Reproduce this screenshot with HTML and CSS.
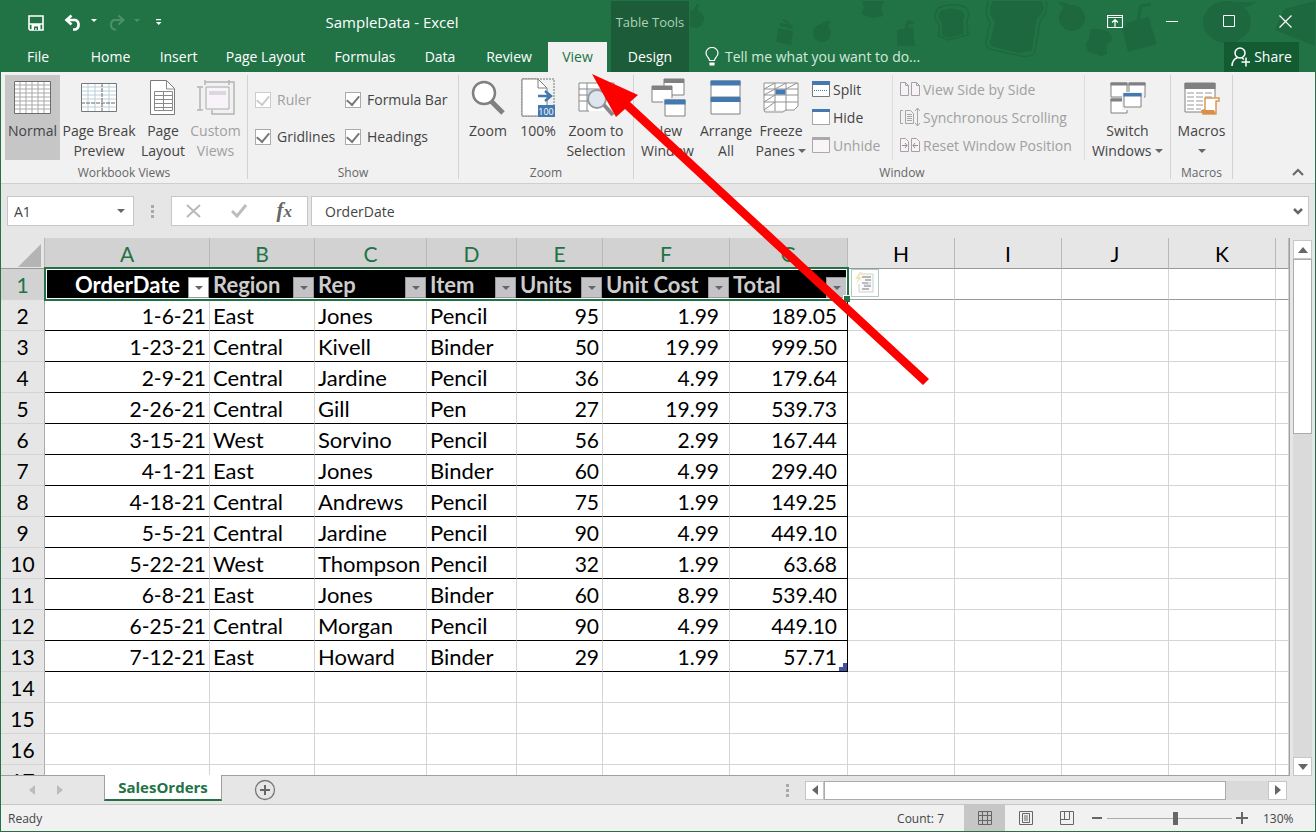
FILE: index.html
```html
<!DOCTYPE html>
<html lang="en">
<head>
<meta charset="utf-8">
<title>SampleData - Excel</title>
<link rel="stylesheet" href="styles.css">
</head>
<body>
<div class="app">
<header class="top">
  <svg class="decor" width="626" height="71" viewBox="690 1 626 71" aria-hidden="true">
    <g fill="#1d683e">
      <circle cx="695" cy="19" r="9"/><path d="M693 11l4-7 3 1-4 8z"/>
      <path d="M778 28l15 3-2 14-15-3z"/><path d="M779 26l14 3-1-4-12-2z"/><path d="M783 20l5 2 1 4" fill="none" stroke="#1d683e" stroke-width="2"/>
      <circle cx="822" cy="33" r="9"/><path d="M820 27q2-7 11-6-2 6-9 8z"/>
      <path d="M862 1h22l-3 9 3 6-12 2-11-4 3-6z"/>
      <path d="M897 30l16-3 2 19h-18z"/><path d="M906 29l2-7 6 1" fill="none" stroke="#1d683e" stroke-width="3"/>
      <path d="M940 11q11-5 22 0 5 4 1 9l1 14-15 4-7-3v-12q-6-6-2-12z"/>
      <path d="M993 1h49q5 11-5 17l-5 33-13 2-26-6q-5-3-2-8l4-17q-9-11-2-21z"/>
      <circle cx="1072" cy="18" r="13"/><path d="M1058 2q9-2 14 7-9 1-14-7z"/>
      <path d="M1090 30q10-4 21 4l1 6-5 5v9l-6 2-14-5-1-8 3-4z"/>
      <path d="M1122 28l27-8 8 24-29 8z"/><path d="M1126 23l22-6 3 5-24 6z"/><path d="M1138 20l3-14 10-2" fill="none" stroke="#1d683e" stroke-width="3"/>
      <ellipse cx="1227" cy="22" rx="24" ry="21"/><path d="M1235 2h21q-8 7-20 5z"/>
      <path d="M1284 9l32-8v44h-4l-37-15z"/>
    </g>
    <g fill="none" stroke="#1d683e" stroke-width="1.500">
      <path d="M938 8q14-6 27-1 6 5 2 13l1 15-20 5-9-4v-12q-7-6-1-16z"/>
      <path d="M989 0q-6 13 1 22l-4 20q0 7 7 8l28 6q12 2 14-5l5-30q9-10 6-20"/>
    </g>
  </svg>
  <div class="title-row">
    <div class="qat">
      <button aria-label="Save"><svg width="16" height="16" viewBox="0 0 16 16"><path d="M1 1h14v14H2l-1-1zM1 9h14" fill="none" stroke="#fff" stroke-width="1.600"/><path d="M3.500 9h9v6h-9z" fill="#fff"/><path d="M6 11.500h4V15H8.500v-2H7.300v2H6z" fill="#217346"/></svg></button>
      <button aria-label="Undo" class="undo"><svg width="34" height="18" viewBox="0 0 34 18"><path d="M2.500 6h9a4.500 5 0 0 1 0 9.500H9" fill="none" stroke="#fff" stroke-width="2.600"/><path d="M7.500 1.500L2.500 6l5 4.500" fill="none" stroke="#fff" stroke-width="2.600"/><path d="M27 5h6l-3 3z" fill="#fff"/></svg></button>
      <button aria-label="Redo" class="redo" disabled><svg width="34" height="18" viewBox="0 0 34 18"><path d="M16 6H7a4.500 5 0 0 0 0 9.500h2" fill="none" stroke="#4c9069" stroke-width="2"/><path d="M11.500 1.500L16.500 6l-5 4.500" fill="none" stroke="#4c9069" stroke-width="2"/><path d="M27 5h6l-3 3z" fill="#4c9069"/></svg></button>
      <button aria-label="Customize Quick Access Toolbar"><svg width="8" height="8" viewBox="0 0 8 8"><path d="M1 0h5v1.300H1zM1 3h5.500L3.800 6z" fill="#fff"/></svg></button>
    </div>
    <div class="doc-title">SampleData - Excel</div>
    <div class="context-title">Table Tools</div>
    <div class="win-controls">
      <button aria-label="Ribbon Display Options"><svg width="16" height="13" viewBox="0 0 16 13"><path d="M.5.500h15v12H.5zM.5 2.500h15M8 12V5M5 7.500L8 4.500l3 3" fill="none" stroke="#fff" stroke-width="1.200"/></svg></button>
      <button aria-label="Minimize"><svg width="12" height="13" viewBox="0 0 12 13"><path d="M0 6.500h12" stroke="#fff"/></svg></button>
      <button aria-label="Maximize"><svg width="12" height="12" viewBox="0 0 12 12"><path d="M.5.500h11v11H.5z" fill="none" stroke="#fff"/></svg></button>
      <button aria-label="Close"><svg width="13" height="13" viewBox="0 0 13 13"><path d="M.5.500l12 12M12.500.500l-12 12" stroke="#fff" stroke-width="1.200"/></svg></button>
    </div>
  </div>
  <nav class="tabs">
    <button class="file">File</button>
    <button>Home</button>
    <button>Insert</button>
    <button>Page Layout</button>
    <button>Formulas</button>
    <button>Data</button>
    <button>Review</button>
    <button class="active">View</button>
    <span></span>
    <button class="context">Design</button>
    <button class="tell"><svg width="14" height="20" viewBox="0 0 14 20"><path d="M4.500 13.500c0-3-3.500-3.500-3.500-7.500a6 5.500 0 0 1 12 0c0 4-3.500 4.500-3.500 7.500zM4.500 16h5" fill="none" stroke="#fff" stroke-width="1.200"/><path d="M4.500 16h5v2.500h-5z" fill="#fff"/></svg>Tell me what you want to do...</button>
    <button class="share"><svg width="19" height="20" viewBox="0 0 19 20"><circle cx="9" cy="6" r="5" fill="none" stroke="#fff" stroke-width="1.500"/><path d="M1 19c0-5 2-7 5.500-8.500M11 11l2 1.500M15 10.500v9M10.500 15h8.500" fill="none" stroke="#fff" stroke-width="1.500"/></svg>Share</button>
  </nav>
</header>

<section class="ribbon">
  <div class="group">
    <div class="tools views">
      <button class="big on"><svg width="38" height="36" viewBox="1 0 38 36"><path d="M1 1h36v32H1z" fill="#fff"/><path d="M7 1v32M13 1v32M19 1v32M25 1v32M31 1v32M1 5h36M1 9h36M1 13h36M1 17h36M1 21h36M1 25h36M1 29h36" stroke="#a9a9a9"/><path d="M1.500 1.500h36v32h-36z" fill="none" stroke="#6d6d6d"/></svg>Normal</button>
      <button class="big"><svg width="38" height="36" viewBox="0 0 38 36"><path d="M1 3h36v28H1z" fill="#fff"/><path d="M8 3v28M15 3v28M29 3v28M1 7h36M1 11h36M1 15h36M1 19h36M1 27h36" stroke="#b9cfdb"/><path d="M22 3v28M1 23h36" stroke="#666" stroke-dasharray="4 1"/><path d="M1.500 3.500h35v28h-35z" fill="none" stroke="#777"/></svg>Page Break Preview</button>
      <button class="big"><svg width="26" height="36" viewBox="0 0 26 36"><path d="M.5.500h16l8 8v26H.5z" fill="#fff" stroke="#7a7a7a"/><path d="M16.500 1v8h8M4.500 11.500h18v19h-18zM13.500 11v19M4 15.500h18M4 19.500h18M4 23.500h18M4 27.500h18" fill="none" stroke="#8a8a8a"/></svg>Page Layout</button>
      <button class="big off"><svg width="38" height="36" viewBox="0 0 38 36"><path d="M9 7h23v22H9z" fill="#f8f3f8" stroke="#aaa"/><path d="M12 11h17v4H12z" fill="#ddd6e0"/><path d="M8 2h24M8 0v5M32 0v5M3 7v23M0 7h6M0 30h6M32 2h5v32H15v-4" fill="none" stroke="#b4b4b4" stroke-width="1.500"/></svg>Custom Views</button>
    </div>
    <h2>Workbook Views</h2>
  </div>
  <div class="group">
    <div class="tools checks">
      <label class="off"><input type="checkbox" checked disabled>Ruler</label>
      <label><input type="checkbox" checked>Formula Bar</label>
      <label><input type="checkbox" checked>Gridlines</label>
      <label><input type="checkbox" checked>Headings</label>
    </div>
    <h2>Show</h2>
  </div>
  <div class="group">
    <div class="tools zooms">
      <button class="big"><svg width="36" height="36" viewBox="0 0 36 36"><path d="M21 21l12 12" stroke="#808080" stroke-width="5"/><circle cx="14" cy="13" r="11" fill="#fff" stroke="#808080" stroke-width="2.500"/></svg>Zoom</button>
      <button class="big"><svg width="34" height="40" viewBox="0 0 34 40"><path d="M1 1h32v37H1z" fill="none" stroke="#777" stroke-dasharray="2 1"/><path d="M1 1h16l9 9v28H1z" fill="#fff" stroke="#808080"/><path d="M17 1v9h9" fill="none" stroke="#808080"/><path d="M17 18h12M24 13l6 5-6 5" fill="none" stroke="#4179b0" stroke-width="2.500"/><path d="M17 27h17v12H17z" fill="#4179b0"/><text x="25" y="37" class="hundred">100</text></svg>100%</button>
      <button class="big"><svg width="38" height="36" viewBox="0 0 38 36"><path d="M2 3h35v22l-10 6H2z" fill="#fff"/><path d="M2 3h35v20M2 3v28h10M2 9h35M2 15h15M2 21h12M10 3v28M28 3v8" fill="none" stroke="#888"/><path d="M11 10h17v10H11z" fill="#c9d8ea"/><circle cx="20" cy="19" r="9" fill="#dce6ef" stroke="#999" stroke-width="2"/><path d="M27 25l9 10" stroke="#888" stroke-width="4"/></svg>Zoom to Selection</button>
    </div>
    <h2>Zoom</h2>
  </div>
  <div class="group">
    <div class="tools windows">
      <button class="big"><svg width="36" height="40" viewBox="0 0 36 40"><g fill="#fff" stroke="#808080"><path d="M14 1h20v16H14z"/><path d="M2 8h20v16H2z"/></g><path d="M14 1h20v4H14zM2 8h20v4H2z" fill="#808080"/><path d="M13 20h23v20H13z" fill="#f1f1f1"/><path d="M15 22h20v16H15z" fill="#fff" stroke="#808080"/><path d="M14.500 21.500h21v5h-21z" fill="#4179b0"/></svg>New Window</button>
      <button class="big"><svg width="32" height="36" viewBox="0 0 32 36"><path d="M1 1h29v16H1zM1 18h29v16H1z" fill="#fff" stroke="#808080"/><path d="M.5.500h30v5H.5zM.5 17h30v5H.5z" fill="#4179b0"/></svg>Arrange All</button>
      <button class="big"><svg width="36" height="36" viewBox="0 0 36 36"><path d="M1 3h34v22l-4 5H6l-5-5z" fill="#fff"/><path d="M1 3h34v23l-4 4h-8l-3 2H2l-1-2zM1 9h34M1 15h34M1 22h34M12 3v28M23 3v28M1 9l11-6M12 9l11-6M23 9l11-6M1 15l11-6M1 22l11-7M1 30l11-8" fill="none" stroke="#929292"/><path d="M12.500 9.500h10v5h-10z" fill="#4179b0"/></svg><span>Freeze Panes <i class="caret"></i></span></button>
      <div class="smalls first">
        <button><svg width="18" height="16" viewBox="0 0 18 16"><path d="M.5.500h17v15H.5z" fill="#fff" stroke="#777"/><path d="M0 0h18v4H0z" fill="#4179b0"/><path d="M2 9.500h14" stroke="#4179b0" stroke-dasharray="1 1"/></svg>Split</button>
        <button><svg width="18" height="16" viewBox="0 0 18 16"><path d="M.5.500h17v15H.5z" fill="#fff" stroke="#555" stroke-dasharray="1 1"/><path d="M0 0h18v3H0z" fill="#4179b0"/></svg>Hide</button>
        <button disabled><svg width="18" height="16" viewBox="0 0 18 16"><path d="M.5.500h17v15H.5z" fill="#f8f4f8" stroke="#aaa"/><path d="M0 0h18v3H0z" fill="#aaa"/></svg>Unhide</button>
      </div>
      <div class="smalls">
        <button disabled><svg width="20" height="16" viewBox="0 0 20 16"><path d="M.5 1.500h5l3 3v10h-8zM5.500 1.500v3h3M11.500 1.500h5l3 3v10h-8zM16.500 1.500v3h3" fill="#f6f2f6" stroke="#a8a0a8"/></svg>View Side by Side</button>
        <button disabled><svg width="20" height="20" viewBox="0 0 20 20"><path d="M3 3.500H.5v13H3M5.500 3.500h5l3 3v10h-8zM7 7.500h5M7 9.500h5M7 11.500h5M7 13.500h5M17.500 1v18M15 4l2.500-3L20 4M15 16l2.500 3 2.500-3" fill="none" stroke="#a6a6a6"/></svg>Synchronous Scrolling</button>
        <button disabled><svg width="20" height="16" viewBox="0 0 20 16"><path d="M.5 1.500h5l3 3v10h-8zM11.500 1.500h5l3 3v10h-8z" fill="#f6f2f6" stroke="#a8a0a8"/><path d="M2 8.500h5M5 6l2 2.500L5 11M18 8.500h-5M15 6l-2 2.500 2 2.500" fill="none" stroke="#909090"/></svg>Reset Window Position</button>
      </div>
      <button class="big"><svg width="36" height="36" viewBox="0 0 36 36"><g fill="#fff" stroke="#808080"><path d="M1 3h16v14H1zM19 3h16v14H19zM1 19h16v14H1z"/></g><path d="M.5 2.500h17v3H.5zM18.500 2.500h17v3h-17zM.5 18.500h17v3H.5z" fill="#808080"/><path d="M12 12h22v18H12z" fill="#f1f1f1"/><path d="M14 14h17v13H14z" fill="#fff" stroke="#808080"/><path d="M13.500 13h18v3.500h-18z" fill="#4179b0"/></svg><span>Switch Windows <i class="caret"></i></span></button>
    </div>
    <h2>Window</h2>
  </div>
  <div class="group">
    <div class="tools macros">
      <button class="big"><svg width="38" height="36" viewBox="0 0 38 36"><path d="M2 3h30v29H2z" fill="#fff" stroke="#808080"/><path d="M1.500 3h31v6h-31z" fill="#808080"/><path d="M4 13h7M13 13h7M22 13h7M4 17h7M13 17h7M22 17h7M4 21h7M13 21h7M4 25h7M13 25h7M4 29h7M13 29h5" stroke="#999"/><path d="M22 18h14v3h-3v13H20v-4h2z" fill="#fff" stroke="#d99a55" stroke-width="1.500"/><path d="M18 30h13l2 4H20q-2-1-2-4z" fill="#d98f45"/></svg><span>Macros <i class="caret"></i></span></button>
    </div>
    <h2>Macros</h2>
  </div>
  <button class="collapse" aria-label="Collapse the Ribbon"><svg width="12" height="8" viewBox="0 0 12 8"><path d="M1 7l5-5 5 5" fill="none" stroke="#666" stroke-width="2"/></svg></button>
</section>

<section class="formula-bar">
  <div class="name-box"><input aria-label="Name Box" value="A1"><i class="caret"></i></div>
  <i class="dots"></i>
  <div class="fx">
    <button aria-label="Cancel"><svg width="16" height="14" viewBox="0 0 16 14"><path d="M1 1l13 12M14 1L1 13" stroke="#b9b9b9" stroke-width="2"/></svg></button>
    <button aria-label="Enter"><svg width="16" height="14" viewBox="0 0 16 14"><path d="M1 7l5 5L15 1" fill="none" stroke="#bdbdbd" stroke-width="3"/></svg></button>
    <button aria-label="Insert Function" class="fn">f<small>x</small></button>
  </div>
  <div class="formula"><input aria-label="Formula Bar" value="OrderDate"><svg width="10" height="7" viewBox="0 0 10 7"><path d="M1 1l4 4 4-4" fill="none" stroke="#666" stroke-width="2.500"/></svg></div>
</section>

<main class="sheet-area">
  <div class="sheet">
  <table>
    <colgroup><col class="w-row"><col class="w-a"><col class="w-b"><col class="w-c"><col class="w-d"><col class="w-e"><col class="w-f"><col class="w-g"><col class="w-h"><col class="w-h"><col class="w-h"><col class="w-h"><col></colgroup>
    <thead><tr><th class="corner"><svg width="24" height="23" viewBox="0 0 24 23"><path d="M23 0v23H0z" fill="#b4b4b4"/></svg></th><th class="sel">A</th><th class="sel">B</th><th class="sel">C</th><th class="sel">D</th><th class="sel">E</th><th class="sel">F</th><th class="sel">G</th><th>H</th><th>I</th><th>J</th><th>K</th><th></th></tr></thead>
    <tbody>
    <tr class="head"><th class="sel">1</th>
      <td><div class="hc first"><span>OrderDate</span><button aria-label="Filter OrderDate"><i class="caret"></i></button></div></td>
      <td><div class="hc"><span>Region</span><button aria-label="Filter Region"><i class="caret"></i></button></div></td>
      <td><div class="hc"><span>Rep</span><button aria-label="Filter Rep"><i class="caret"></i></button></div></td>
      <td><div class="hc"><span>Item</span><button aria-label="Filter Item"><i class="caret"></i></button></div></td>
      <td><div class="hc"><span>Units</span><button aria-label="Filter Units"><i class="caret"></i></button></div></td>
      <td><div class="hc"><span>Unit Cost</span><button aria-label="Filter Unit Cost"><i class="caret"></i></button></div></td>
      <td><div class="hc"><span>Total</span><button aria-label="Filter Total"><i class="caret"></i></button></div></td>
      <td></td><td></td><td></td><td></td><td></td></tr>
    <tr class="d"><th>2</th><td>1-6-21</td><td>East</td><td>Jones</td><td>Pencil</td><td>95</td><td>1.99</td><td>189.05</td><td></td><td></td><td></td><td></td><td></td></tr>
    <tr class="d"><th>3</th><td>1-23-21</td><td>Central</td><td>Kivell</td><td>Binder</td><td>50</td><td>19.99</td><td>999.50</td><td></td><td></td><td></td><td></td><td></td></tr>
    <tr class="d"><th>4</th><td>2-9-21</td><td>Central</td><td>Jardine</td><td>Pencil</td><td>36</td><td>4.99</td><td>179.64</td><td></td><td></td><td></td><td></td><td></td></tr>
    <tr class="d"><th>5</th><td>2-26-21</td><td>Central</td><td>Gill</td><td>Pen</td><td>27</td><td>19.99</td><td>539.73</td><td></td><td></td><td></td><td></td><td></td></tr>
    <tr class="d"><th>6</th><td>3-15-21</td><td>West</td><td>Sorvino</td><td>Pencil</td><td>56</td><td>2.99</td><td>167.44</td><td></td><td></td><td></td><td></td><td></td></tr>
    <tr class="d"><th>7</th><td>4-1-21</td><td>East</td><td>Jones</td><td>Binder</td><td>60</td><td>4.99</td><td>299.40</td><td></td><td></td><td></td><td></td><td></td></tr>
    <tr class="d"><th>8</th><td>4-18-21</td><td>Central</td><td>Andrews</td><td>Pencil</td><td>75</td><td>1.99</td><td>149.25</td><td></td><td></td><td></td><td></td><td></td></tr>
    <tr class="d"><th>9</th><td>5-5-21</td><td>Central</td><td>Jardine</td><td>Pencil</td><td>90</td><td>4.99</td><td>449.10</td><td></td><td></td><td></td><td></td><td></td></tr>
    <tr class="d"><th>10</th><td>5-22-21</td><td>West</td><td>Thompson</td><td>Pencil</td><td>32</td><td>1.99</td><td>63.68</td><td></td><td></td><td></td><td></td><td></td></tr>
    <tr class="d"><th>11</th><td>6-8-21</td><td>East</td><td>Jones</td><td>Binder</td><td>60</td><td>8.99</td><td>539.40</td><td></td><td></td><td></td><td></td><td></td></tr>
    <tr class="d"><th>12</th><td>6-25-21</td><td>Central</td><td>Morgan</td><td>Pencil</td><td>90</td><td>4.99</td><td>449.10</td><td></td><td></td><td></td><td></td><td></td></tr>
    <tr class="d last"><th>13</th><td>7-12-21</td><td>East</td><td>Howard</td><td>Binder</td><td>29</td><td>1.99</td><td>57.71</td><td></td><td></td><td></td><td></td><td></td></tr>
    <tr><th>14</th><td></td><td></td><td></td><td></td><td></td><td></td><td></td><td></td><td></td><td></td><td></td><td></td></tr>
    <tr><th>15</th><td></td><td></td><td></td><td></td><td></td><td></td><td></td><td></td><td></td><td></td><td></td><td></td></tr>
    <tr><th>16</th><td></td><td></td><td></td><td></td><td></td><td></td><td></td><td></td><td></td><td></td><td></td><td></td></tr>
    <tr><th>17</th><td></td><td></td><td></td><td></td><td></td><td></td><td></td><td></td><td></td><td></td><td></td><td></td></tr>
    </tbody>
  </table>
  <div class="selection"></div>
  <button class="quick" aria-label="Quick Analysis"><svg width="20" height="22" viewBox="0 0 20 22"><path d="M6 2h12v18H4v-8" fill="#fafafa" stroke="#ccd2d2"/><path d="M7 5h9M10 8h6M7 11h6M9 14h7M7 17h7" stroke="#b9b9b0" stroke-width="2"/><path d="M9 13h7M7 11h9" stroke="#b8c4e0" stroke-width="1"/><path d="M5 0L0 7h3l-2 5 6-7H4l3-5z" fill="#f1e6b4"/></svg></button>
  </div>
  <div class="vscroll">
    <button aria-label="Scroll up"><svg width="10" height="6" viewBox="0 0 10 6"><path d="M0 6l5-6 5 6z" fill="#666"/></svg></button>
    <div class="thumb"></div><div class="track"></div>
    <button aria-label="Scroll down"><svg width="10" height="6" viewBox="0 0 10 6"><path d="M0 0l5 6 5-6z" fill="#666"/></svg></button>
  </div>
</main>

<section class="sheet-tabs">
  <div class="nav">
    <button aria-label="Previous sheet"><svg width="6" height="10" viewBox="0 0 6 10"><path d="M6 0L0 5l6 5z" fill="#bcbcbc"/></svg></button>
    <button aria-label="Next sheet"><svg width="6" height="10" viewBox="0 0 6 10"><path d="M0 0l6 5-6 5z" fill="#bcbcbc"/></svg></button>
  </div>
  <button class="sheet-tab">SalesOrders</button>
  <button class="add" aria-label="New sheet"><svg width="22" height="22" viewBox="0 0 22 22"><circle cx="11" cy="11" r="9.500" fill="none" stroke="#777" stroke-width="1.300"/><path d="M11 6v10M6 11h10" stroke="#666" stroke-width="2"/></svg></button>
  <i class="dots"></i>
  <div class="hscroll">
    <button aria-label="Scroll left"><svg width="6" height="10" viewBox="0 0 6 10"><path d="M6 0L0 5l6 5z" fill="#666"/></svg></button>
    <div class="thumb"></div><div class="track"></div>
    <button aria-label="Scroll right"><svg width="6" height="10" viewBox="0 0 6 10"><path d="M0 0l6 5-6 5z" fill="#666"/></svg></button>
  </div>
</section>

<footer class="status">
  <span class="ready">Ready</span>
  <span class="count">Count: 7</span>
  <button class="on" aria-label="Normal view"><svg width="14" height="14" viewBox="0 0 14 14"><path d="M.5.500h13v13H.5zM4.500 0v14M9.500 0v14M0 4.500h14M0 9.500h14" fill="none" stroke="#666"/></svg></button>
  <button aria-label="Page layout view"><svg width="14" height="14" viewBox="0 0 14 14"><path d="M.5.500h13v13H.5zM3.500 2.500h7v9h-7zM5 5h4M5 7h4M5 9h4" fill="none" stroke="#666"/></svg></button>
  <button aria-label="Page break view"><svg width="14" height="14" viewBox="0 0 14 14"><path d="M.5.500h13v13H.5zM4.500 0v8M9.500 0v8.500H1" fill="none" stroke="#666"/></svg></button>
  <button class="step" aria-label="Zoom out"><svg width="10" height="12" viewBox="0 0 10 12"><path d="M0 6h10" stroke="#666" stroke-width="2"/></svg></button>
  <input type="range" aria-label="Zoom" min="0" max="100" value="55">
  <button class="step" aria-label="Zoom in"><svg width="12" height="12" viewBox="0 0 12 12"><path d="M0 6h12M6 0v12" stroke="#666" stroke-width="2"/></svg></button>
  <span class="percent">130%</span>
</footer>
<svg class="arrow" width="340" height="314" viewBox="590 72 340 314" aria-hidden="true"><path d="M592 74L638 95L630 102L929 379L923 385L625 109L616 117z" fill="#fe0000"/></svg>
</div>
</body>
</html>
```

FILE: styles.css
```css
* { box-sizing: border-box; }
body {
  margin: 0;
  font-family: "Open Sans", "Noto Sans", sans-serif;
  font-size: 14px;
  color: #444;
}
button, input { font: inherit; color: inherit; }
button { border: 0; padding: 0; margin: 0; background: none; white-space: nowrap; }
svg { display: block; flex: none; }

.app {
  position: relative;
  display: flex;
  flex-direction: column;
  height: 100vh;
  border: 1px solid #217346;
  background: #e6e6e6;
  overflow: hidden;
}
.caret {
  display: inline-block;
  flex: none;
  border: 4px solid transparent;
  border-top-color: #666;
  border-bottom: 0;
}
.dots {
  width: 3px;
  height: 13px;
  background: repeating-linear-gradient(#a9a9a9 0 3px, transparent 3px 5px);
}

/* Title bar and tabs */
.top { position: relative; flex: none; background: #217346; color: #fff; }
.decor { position: absolute; top: 0; right: -1px; }
.title-row {
  position: relative;
  display: grid;
  grid-template-columns: 236px 310px 64px 78px 1fr;
  height: 41px;
}
.qat { display: flex; align-items: center; padding-left: 27px; }
.qat .undo { margin-left: 20px; }
.qat .redo { margin: 0 14px 0 9px; }
.doc-title, .context-title { line-height: 43px; text-align: center; }
.doc-title { font-size: 15px; }
.context-title {
  grid-column: 4;
  background: #1d5c39;
  color: #a9d3b8;
  font-size: 13px;
}
.win-controls {
  display: grid;
  grid-template-columns: repeat(4, 57px);
  justify-content: end;
  padding-right: 1px;
  padding-bottom: 3px;
}
.win-controls button { display: flex; align-items: center; justify-content: center; }
.tabs {
  position: relative;
  display: grid;
  grid-template-columns: 74px 71px 65px 109px 90px 60px 78px 59px 4px 78px 1fr 91px;
  height: 30px;
}
.tabs button { line-height: 30px; }
.tabs .active { background: #f1f1f1; color: #217346; }
.tabs .context { background: #1d5c39; }
.tabs .tell { display: flex; align-items: center; gap: 6px; padding-left: 16px; color: #d3eadb; }
.tabs .share {
  display: flex;
  align-items: center;
  justify-content: center;
  gap: 4px;
  margin-right: 16px;
  background: #135c33;
}

/* Ribbon */
.ribbon {
  display: flex;
  flex: none;
  height: 112px;
  background: #f1f1f1;
  border-bottom: 1px solid #cfcfcf;
}
.group {
  display: flex;
  flex-direction: column;
  justify-content: space-between;
  margin: 3px 0 4px;
  border-right: 1px solid #d2d2d2;
}
.group h2 {
  margin: 0;
  font-size: 12px;
  font-weight: 400;
  line-height: 12px;
  color: #666;
  text-align: center;
}
.tools { display: grid; padding: 0 4px; }
.views { grid-template-columns: 55px 78px 50px 55px; }
.zooms { grid-template-columns: 50px 50px 66px; }
.windows { grid-template-columns: 59px 58px 52px 86px 192px 85px; padding-right: 0; }
.macros { grid-template-columns: 53px; }
.big {
  display: flex;
  flex-direction: column;
  align-items: center;
  height: 85px;
  line-height: 20px;
  text-align: center;
  white-space: normal;
}
.big svg { height: 40px; margin: 3px 0 3px; }
.big.on { background: #c6c6c6; }
.off, .ribbon button:disabled { color: #a0a0a0; }
.big .caret { margin-bottom: 3px; }
.hundred { font-size: 9px; fill: #fff; text-anchor: middle; }
.checks {
  grid-template-columns: 90px 107px;
  grid-auto-rows: 37px;
  padding: 6px 6px 0 7px;
}
.checks label { display: flex; align-items: center; gap: 6px; white-space: nowrap; }
.checks input {
  appearance: none;
  display: grid;
  place-items: center;
  flex: none;
  width: 16px;
  height: 16px;
  margin: 0;
  border: 1px solid #ababab;
  background: #fff;
}
.checks input::before {
  content: "";
  width: 6px;
  height: 10px;
  margin-bottom: 3px;
  border: solid #777;
  border-width: 0 2px 2px 0;
  transform: rotate(40deg);
}
.checks input:disabled { border-color: #ccc; }
.checks input:disabled::before { border-color: #ccc; }
.smalls {
  display: grid;
  grid-template-rows: repeat(3, 28px);
  padding-left: 7px;
  border-right: 1px solid #dcdcdc;
}
.smalls.first { padding-left: 5px; }
.smalls button { display: flex; align-items: center; gap: 3px; }
.collapse { align-self: end; margin: 0 11px 7px auto; }

/* Formula bar */
.formula-bar {
  display: flex;
  align-items: center;
  flex: none;
  height: 54px;
  padding: 0 6px;
}
.name-box, .fx, .formula {
  display: flex;
  align-items: center;
  height: 30px;
  border: 1px solid #c6c6c6;
  background: #fff;
}
.name-box { width: 127px; padding: 0 8px 0 6px; }
.name-box input, .formula input { flex: 1; min-width: 0; border: 0; padding: 0; background: none; }
.formula-bar .dots { margin: 0 17px; }
.fx { width: 137px; justify-content: space-between; padding: 0 15px 0 14px; }
.fn { font: italic 700 21px/24px "Liberation Serif", serif; color: #666; }
.fn small { font-size: 17px; }
.formula { flex: 1; margin-left: 3px; padding: 0 5px 0 13px; }

/* Worksheet */
.sheet-area { display: flex; flex: 1; min-height: 0; }
.sheet {
  position: relative;
  flex: 1;
  overflow: hidden;
  border-right: 1px solid #a0a0a0;
  border-bottom: 1px solid #a0a0a0;
}
table {
  width: 100%;
  table-layout: fixed;
  border-collapse: separate;
  border-spacing: 0;
  font-family: Lato, sans-serif;
  font-size: 22px;
  color: #000;
  background: #fff;
}
.w-row { width: 44px; }
.w-a { width: 165px; }
.w-b { width: 105px; }
.w-c { width: 112px; }
.w-d { width: 90px; }
.w-e { width: 86px; }
.w-f { width: 127px; }
.w-g { width: 118px; }
.w-h { width: 107px; }
th, td {
  height: 31px;
  padding: 1px 3px 0;
  line-height: 29px;
  border: solid #d4d4d4;
  border-width: 0 1px 1px 0;
  white-space: nowrap;
}
th {
  padding: 1px 0 0;
  font-size: 21px;
  font-weight: 400;
  background: #e6e6e6;
  border-right-color: #ababab;
}
thead th { border-color: #b9b9b9; border-bottom-color: #999; }
.sel { background: #d2d2d2; color: #217346; }
.corner svg { margin: 4px 0 0 17px; }
.head td { border-bottom-color: #999; }
.head td:nth-child(-n+8) { padding: 1px 0 0; background: #000; border-right-color: #000; }
.hc { display: flex; align-items: end; justify-content: space-between; padding-left: 3px; font-weight: 700; color: #ccc; }
.hc button {
  display: grid;
  place-items: center;
  width: 21px;
  height: 21px;
  margin: 0 0 1px;
  border: 1px solid #999;
  background: #c4c4c8;
}
.hc.first { justify-content: end; gap: 8px; color: #fff; }
.hc.first button { background: #fff; }
.d td:nth-child(2), .d td:nth-child(6), .d td:nth-child(7), .d td:nth-child(8) { font-size: 21px; text-align: right; }
.d td:nth-child(7), .d td:nth-child(8) { padding-right: 10px; }
.d td:nth-child(-n+8) { border-bottom-color: #000; }
.d td:nth-child(8) { border-right-color: #000; }
.last td:nth-child(8) {
  background: linear-gradient(#44549c, #44549c) right bottom / 4px 8px no-repeat,
    linear-gradient(#44549c, #44549c) right bottom / 8px 4px no-repeat;
}
.selection {
  position: absolute;
  top: 29px;
  left: 43px;
  width: 805px;
  height: 34px;
  border: 2px solid #217346;
  box-shadow: inset 0 0 0 1px #fff;
}
.selection::after {
  content: "";
  position: absolute;
  right: -3px;
  bottom: -3px;
  width: 6px;
  height: 6px;
  border: solid #fff;
  border-width: 1px 0 0 1px;
  background: #217346;
}
.quick {
  position: absolute;
  top: 31px;
  left: 850px;
  display: grid;
  place-items: center;
  width: 28px;
  height: 28px;
  border: 1px solid #b4cabd;
  background: #fff;
}

/* Scroll bars */
.vscroll { display: flex; flex-direction: column; width: 19px; margin: 2px 3px 0; }
.vscroll button, .hscroll button {
  display: grid;
  place-items: center;
  flex: none;
  width: 19px;
  height: 19px;
  border: 1px solid #c6c6c6;
  background: #fff;
}
.thumb { border: 1px solid #ababab; background: #fff; }
.track { background: #dadada; }
.vscroll .thumb { flex: 173; }
.vscroll .track { flex: 324; }
.sheet-tabs { display: flex; flex: none; align-items: center; height: 28px; padding-right: 28px; }
.nav { display: flex; gap: 22px; width: 103px; padding-left: 28px; }
.sheet-tab {
  align-self: start;
  width: 118px;
  height: 26px;
  margin-top: -1px;
  position: relative;
  border: solid #a0a0a0;
  border-width: 0 1px;
  border-bottom: 2px solid #217346;
  background: #fff;
  color: #217346;
  font-size: 15px;
  line-height: 22px;
  font-weight: 700;
}
.add { margin-left: 32px; }
.sheet-tabs .dots { margin: 0 16px 0 auto; }
.hscroll { display: flex; width: 482px; }
.hscroll .thumb { flex: 402; }
.hscroll .track { flex: 42; }

/* Status bar */
.status {
  display: flex;
  align-items: center;
  flex: none;
  height: 27px;
  padding-left: 7px;
  border-top: 1px solid #c6c6c6;
  background: #f1f1f1;
  font-size: 12px;
}
.count { margin: 0 20px 0 auto; }
.status button { display: grid; place-items: center; width: 41px; height: 26px; }
.status .on { background: #c6c6c6; }
.status .step { width: 20px; }
.status input {
  appearance: none;
  width: 125px;
  height: 14px;
  margin: 0;
  background: linear-gradient(#ababab, #ababab) center / 100% 1px no-repeat;
}
.status input::-webkit-slider-thumb {
  appearance: none;
  width: 5px;
  height: 13px;
  background: #666;
}
.percent { width: 63px; padding-left: 11px; }
.arrow { position: absolute; top: 71px; left: 589px; pointer-events: none; }
```
